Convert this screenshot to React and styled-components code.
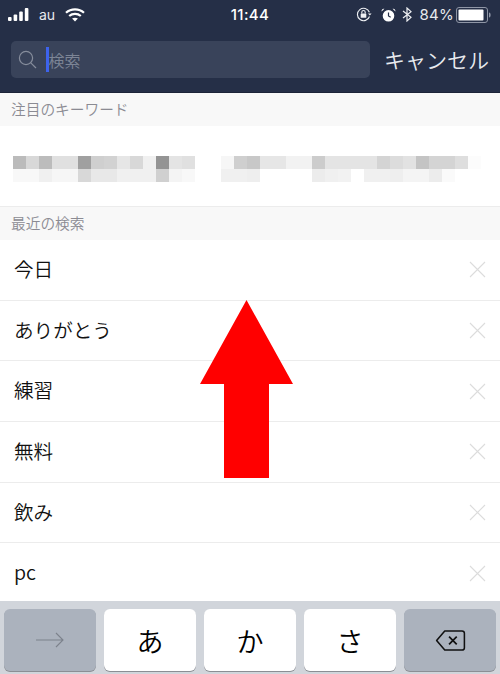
import React from 'react'
import styled, { createGlobalStyle } from 'styled-components'

const GlobalStyle = createGlobalStyle`
  html, body {
    margin: 0;
    padding: 0;
    background: #fff;
  }
  body {
    font-family: "Noto Sans CJK JP", "Noto Sans", sans-serif;
  }
`

const Page = styled.div`
  position: relative;
  width: 500px;
  height: 674px;
  display: flex;
  flex-direction: column;
  overflow: hidden;
`

const Header = styled.header`
  flex: 0 0 93px;
  box-sizing: border-box;
  background: #252f47;
  border-bottom: 1px solid #1c2438;
  color: #fff;
`

const StatusBar = styled.div`
  height: 29px;
  padding: 0 8px 0 8px;
  display: grid;
  grid-template-columns: 1fr auto 1fr;
  align-items: center;
  font-family: Inter, "Liberation Sans", sans-serif;
`

const StatusLeft = styled.div`
  display: flex;
  align-items: center;
`

const StatusRight = styled.div`
  display: flex;
  align-items: center;
  justify-content: flex-end;
  gap: 6px;

  & > svg:first-child {
    margin-right: 3px;
  }
`

const Carrier = styled.span`
  font-size: 14px;
  margin: 0 10px 0 9px;
  color: #e8eaee;
`

const Time = styled.span`
  font-size: 15px;
  font-weight: 500;
  letter-spacing: 0.4px;
`

const Percent = styled.span`
  font-size: 15px;
  color: #e8eaee;
  letter-spacing: 0.3px;
  margin: 0 -4px 0 1px;
`

const SearchRow = styled.div`
  display: flex;
  align-items: center;
  padding: 12px 0 0 11px;
`

const SearchBox = styled.div`
  width: 359px;
  height: 37px;
  box-sizing: border-box;
  padding-left: 7px;
  display: flex;
  align-items: center;
  background: #39435a;
  border-radius: 5px;
`

const Caret = styled.span`
  width: 2.5px;
  height: 25px;
  margin-left: 9px;
  background: #3d63ee;
`

const Placeholder = styled.span`
  font-size: 16px;
  font-weight: 350;
  color: #7d8596;
`

const Cancel = styled.span`
  margin-left: 14px;
  font-size: 21px;
  font-weight: 350;
  line-height: 1;
  color: #e9ebef;
  white-space: nowrap;
`

const SectionLabel = styled.div`
  flex: 0 0 33px;
  box-sizing: border-box;
  padding: 7px 0 0 11px;
  background: #f8f8f8;
  font-size: 14.7px;
  font-weight: 350;
  line-height: 18px;
  color: #8b8b93;
`

const Featured = styled.div`
  flex: 0 0 81px;
  box-sizing: border-box;
  padding: 30px 0 0 13px;
  display: flex;
  gap: 26px;
  background: #fff;
  border-bottom: 1px solid #ececec;
`

const Mosaic = styled.div`
  display: grid;
  grid-template-columns: repeat(${p => p.$cols}, 13px);
  grid-auto-rows: 13px;
`

const Cell = styled.span`
  display: block;
`

const List = styled.div`
  flex: 1;
  min-height: 0;
  overflow: hidden;
`

const Row = styled.div`
  height: 60.7px;
  box-sizing: border-box;
  padding: 0 14px 0 14px;
  display: flex;
  align-items: center;
  justify-content: space-between;
  background: #fff;
  border-bottom: 1px solid #ececec;
  font-size: 19.6px;
  font-weight: 350;
  color: #111;
`

const RowText = styled.span`
  margin-bottom: 3px;
`

const Keyboard = styled.div`
  flex: 0 0 73px;
  box-sizing: border-box;
  padding: 8px 4px 3px;
  display: flex;
  gap: 8px;
  background: #d1d5db;
`

const Key = styled.div`
  flex: 1;
  display: flex;
  align-items: center;
  justify-content: center;
  background: ${p => (p.$dark ? '#abb2bd' : '#fff')};
  border-radius: 6px;
  box-shadow: 0 1px 0 #8b8e94;
  font-size: 27px;
  font-weight: 350;
  color: #000;
`

const ArrowMark = styled.svg`
  position: absolute;
  left: 200px;
  top: 300px;
`

const featuredA = [
  ['bbb', 'd8d8d8', 'bcbcbc', 'e0e0e0', 'e0e0e0', 'a0a0a0', 'cfcfcf', 'd2d2d2', 'e6e6e6', 'd8d8d8', 'f0f0f0', '949494', 'e4e4e4', 'e0e0e0'],
  ['f8f8f8', 'f8f8f8', 'f0f0f0', 'f6f6f6', 'f6f6f6', 'd8d8d8', 'e8e8e8', 'e8e8e8', 'f0f0f0', 'f0f0f0', 'f0f0f0', 'd0d0d0', 'f4f4f4', 'f8f8f8'],
]

const featuredB = [
  ['f6f6f6', 'cfcfcf', 'c8c8c8', 'e6e6e6', 'e6e6e6', 'f2f2f2', 'f2f2f2', 'cccccc', 'e4e4e4', 'e4e4e4', 'e4e4e4', 'e4e4e4', 'd4d4d4', 'dcdcdc', 'e2e2e2', 'c4c4c4', 'd4d4d4', 'd4d4d4', 'dedede', 'fcfcfc'],
  ['f0f0f0', 'f0f0f0', 'eeeeee', 'fff', 'fff', 'fff', 'fff', 'ececec', 'f0f0f0', 'f2f2f2', 'fff', 'f0f0f0', 'f0f0f0', 'eeeeee', 'f4f4f4', 'f4f4f4', 'ececec', 'fafafa', 'fff', 'fff'],
]

const recent = ['今日', 'ありがとう', '練習', '無料', '飲み', 'pc']

const Pixelated = ({ rows }) => (
  <Mosaic $cols={rows[0].length}>
    {rows.flat().map((c, i) => (
      <Cell key={i} style={{ background: `#${c}` }} />
    ))}
  </Mosaic>
)

const SignalIcon = () => (
  <svg width="22" height="13" viewBox="0 0 22 13" fill="#fff">
    <rect x="0" y="9" width="3.6" height="4" rx="1" />
    <rect x="5.6" y="6.5" width="3.6" height="6.5" rx="1" />
    <rect x="11.2" y="3.5" width="3.6" height="9.5" rx="1" />
    <rect x="16.8" y="0" width="3.6" height="13" rx="1" />
  </svg>
)

const WifiIcon = () => (
  <svg width="20" height="14" viewBox="0 0 20 14" fill="none" stroke="#fff" strokeWidth="2.2">
    <path d="M1 4.8C6 .2 14 .2 19 4.8" />
    <path d="M4.2 8C7.4 5.2 12.6 5.2 15.8 8" />
    <path d="M10 13.6l-2.9-3c1.7-1.3 4.1-1.3 5.8 0z" fill="#fff" stroke="none" />
  </svg>
)

const RotationLockIcon = () => (
  <svg width="16" height="15" viewBox="0 0 16 15" fill="none" stroke="#eef0f3" strokeWidth="1.1">
    <path d="M13.4 5.2A6.2 6.2 0 1 0 13.5 9.5" />
    <path d="M12 6.6h3.6l-1.8 2z" fill="#eef0f3" stroke="none" />
    <rect x="4.7" y="6.4" width="5.6" height="4.4" rx=".6" fill="#eef0f3" stroke="none" />
    <path d="M5.8 6.6V5.2a1.7 1.7 0 0 1 3.4 0v1.4" />
  </svg>
)

const AlarmIcon = () => (
  <svg width="15" height="14" viewBox="0 0 15 14" fill="#fff">
    <path d="M7.5 2a5.8 5.8 0 1 0 0 11.6A5.8 5.8 0 0 0 7.5 2z" />
    <path d="M7.5 4.5V8l2.2 1.3" fill="none" stroke="#252f47" strokeWidth="1.2" />
    <path d="M.6 3.4L3.4.8C2 .3.3 1.6.6 3.4zM14.4 3.4L11.6.8c1.4-.5 3.1.8 2.8 2.6z" />
  </svg>
)

const BluetoothIcon = () => (
  <svg width="10" height="15" viewBox="0 0 10 15" fill="none" stroke="#eef0f3" strokeWidth="1.2">
    <path d="M1 4l8 6.4L5 14V1l4 3.6L1 11" />
  </svg>
)

const BatteryIcon = () => (
  <svg width="36" height="16" viewBox="0 0 36 16">
    <rect x=".5" y=".5" width="31" height="15" rx="2.5" fill="none" stroke="#8f96a6" />
    <rect x="2.5" y="2.5" width="25" height="11" rx="1" fill="#fff" />
    <path d="M33 5.5c1.2.2 1.6 1 1.6 2.5s-.4 2.3-1.6 2.5z" fill="#8f96a6" />
  </svg>
)

const SearchIcon = () => (
  <svg width="19" height="19" viewBox="0 0 19 19" fill="none" stroke="#868d9c" strokeWidth="1.2">
    <circle cx="8" cy="8" r="6.6" />
    <path d="M12.8 12.8l5.2 5.2" />
  </svg>
)

const CloseIcon = () => (
  <svg width="17" height="17" viewBox="0 0 17 17" fill="none" stroke="#dcdcdc" strokeWidth="1.1">
    <path d="M1 1l15 15M16 1L1 16" />
  </svg>
)

const NextIcon = () => (
  <svg width="28" height="16" viewBox="0 0 28 16" fill="none" stroke="#7c828c" strokeWidth="1.1">
    <path d="M0 8h27M20 1l7 7-7 7" />
  </svg>
)

const BackspaceIcon = () => (
  <svg width="31" height="23" viewBox="0 0 32 24" fill="none" stroke="#111" strokeWidth="1.6">
    <path d="M10 2h18a2.5 2.5 0 0 1 2.5 2.5v15A2.5 2.5 0 0 1 28 22H10L1.5 12z" strokeLinejoin="round" />
    <path d="M14.5 8l8 8M22.5 8l-8 8" strokeWidth="1.8" />
  </svg>
)

const App = () => {
  return (
    <Page>
      <GlobalStyle />
      <Header>
        <StatusBar>
          <StatusLeft>
            <SignalIcon />
            <Carrier>au</Carrier>
            <WifiIcon />
          </StatusLeft>
          <Time>11:44</Time>
          <StatusRight>
            <RotationLockIcon />
            <AlarmIcon />
            <BluetoothIcon />
            <Percent>84%</Percent>
            <BatteryIcon />
          </StatusRight>
        </StatusBar>
        <SearchRow>
          <SearchBox>
            <SearchIcon />
            <Caret />
            <Placeholder>検索</Placeholder>
          </SearchBox>
          <Cancel>キャンセル</Cancel>
        </SearchRow>
      </Header>
      <SectionLabel>注目のキーワード</SectionLabel>
      <Featured>
        <Pixelated rows={featuredA} />
        <Pixelated rows={featuredB} />
      </Featured>
      <SectionLabel>最近の検索</SectionLabel>
      <List>
        {recent.map(word => (
          <Row key={word}>
            <RowText>{word}</RowText>
            <CloseIcon />
          </Row>
        ))}
      </List>
      <Keyboard>
        <Key $dark><NextIcon /></Key>
        <Key>あ</Key>
        <Key>か</Key>
        <Key>さ</Key>
        <Key $dark><BackspaceIcon /></Key>
      </Keyboard>
      <ArrowMark width="93" height="178" viewBox="0 0 93 178">
        <path d="M46.5 0L93 84H69v94H24V84H0z" fill="#ff0000" />
      </ArrowMark>
    </Page>
  )
}

export default App
